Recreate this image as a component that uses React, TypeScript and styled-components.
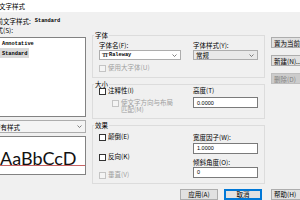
import React from "react";
import styled, { createGlobalStyle } from "styled-components";

const GlobalStyle = createGlobalStyle`
  html, body {
    margin: 0;
    padding: 0;
    background: #f0f0f0;
    overflow: hidden;
  }
`;

const Dialog = styled.div`
  width: 340px;
  height: 200px;
  margin-left: -20px;
  background: #f0f0f0;
  font-family: "Noto Sans CJK SC", "Noto Sans", sans-serif;
  font-size: 6.5px;
  line-height: 8px;
  color: #000;
`;

const TitleBar = styled.div`
  height: 12px;
  background: #fff;
  display: flex;
  align-items: center;
  padding-left: 19px;
  font-size: 6.5px;
`;

const Body = styled.div`
  display: grid;
  grid-template-columns: 96px 173px 52px;
  grid-template-rows: auto auto;
  column-gap: 6px;
  padding: 5px 0 0 10px;
`;

const LeftColumn = styled.div`
  display: flex;
  flex-direction: column;
`;

const Line = styled.div<{ $mt?: number }>`
  height: 8px;
  margin-top: ${(p) => p.$mt ?? 0}px;
  display: flex;
  align-items: center;
  gap: 4px;
  white-space: nowrap;
`;

const Mono = styled.span`
  font-family: "Liberation Mono", "DejaVu Sans Mono", monospace;
  font-weight: bold;
  font-size: 5.3px;
`;

const StyleList = styled.div`
  margin-top: 3px;
  height: 80px;
  box-sizing: border-box;
  background: #fff;
  border: 1px solid #828282;
`;

const ListItem = styled.div`
  height: 10px;
  display: flex;
  align-items: center;
`;

const ItemIcon = styled.span`
  width: 9px;
  height: 8px;
  flex: none;
  display: flex;
  align-items: center;
  justify-content: flex-end;
`;

const ItemText = styled.span<{ $selected?: boolean }>`
  padding: 0 2px;
  line-height: 8px;
  background: ${(p) => (p.$selected ? "#d9d9d9" : "transparent")};
`;

const Combo = styled.div<{ $bg?: string; $mt?: number }>`
  height: ${(p) => (p.$mt !== undefined ? 10 : 13)}px;
  margin-top: ${(p) => p.$mt ?? 3}px;
  box-sizing: border-box;
  border: 1px solid #adadad;
  background: ${(p) => p.$bg ?? "#e9e9e9"};
  display: flex;
  align-items: center;
  justify-content: space-between;
  padding: 0 3px 0 2px;
  white-space: nowrap;
`;

const ComboValue = styled.span`
  display: flex;
  align-items: center;
  gap: 2px;
`;

const Preview = styled.div`
  margin-top: 3px;
  height: 39px;
  box-sizing: border-box;
  background: #fff;
  border: 1px solid #828282;
  overflow: hidden;
`;

const Sample = styled.div`
  height: 28px;
  border-bottom: 1px solid #c86464;
  display: flex;
  align-items: flex-end;
  padding-left: 9px;
  font-family: Lato, "Open Sans", sans-serif;
  font-size: 18px;
  line-height: 14px;
  color: #111;
  white-space: nowrap;
`;

const GroupColumn = styled.div`
  padding-top: 18px;
  display: flex;
  flex-direction: column;
`;

const GroupBox = styled.div<{ $mt?: number; $pb?: number }>`
  position: relative;
  margin-top: ${(p) => p.$mt ?? 0}px;
  border: 1px solid #dcdcdc;
  padding: 0 6px ${(p) => p.$pb ?? 4}px 6px;
  display: grid;
  grid-template-columns: 82px 65px;
  column-gap: 12px;
`;

const GroupTitle = styled.span`
  position: absolute;
  top: -5px;
  left: 1px;
  padding: 0 1px;
  background: #f0f0f0;
  line-height: 8px;
`;

const Column = styled.div`
  display: flex;
  flex-direction: column;
`;

const Label = styled.div<{ $mt?: number }>`
  margin-top: ${(p) => p.$mt ?? 0}px;
  line-height: 8px;
  white-space: nowrap;
`;

const CheckRow = styled.div<{ $mt?: number; $disabled?: boolean; $indent?: number }>`
  margin-top: ${(p) => p.$mt ?? 0}px;
  padding-left: ${(p) => p.$indent ?? 0}px;
  display: flex;
  align-items: flex-start;
  gap: 2px;
  line-height: 7px;
  color: ${(p) => (p.$disabled ? "#a0a0a0" : "#000")};
  white-space: nowrap;
`;

const TwoLines = styled.span`
  line-height: 7.5px;
  margin-top: -0.5px;
`;

const Box = styled.span<{ $disabled?: boolean }>`
  width: 5px;
  height: 5px;
  flex: none;
  margin-top: 1px;
  border: 1px solid ${(p) => (p.$disabled ? "#c4c4c4" : "#333")};
  background: ${(p) => (p.$disabled ? "#f4f4f4" : "#fff")};
`;

const TextInput = styled.div<{ $mt?: number }>`
  margin-top: ${(p) => p.$mt ?? 0}px;
  height: 11px;
  box-sizing: border-box;
  border: 1px solid #7a7a7a;
  background: #fff;
  padding-left: 3px;
  display: flex;
  align-items: center;
  font-family: "Liberation Sans", Arial, sans-serif;
  font-size: 5.5px;
`;

const SideButtons = styled.div`
  padding-top: 20px;
  display: flex;
  flex-direction: column;
  gap: 7px;
`;

const Button = styled.div<{ $disabled?: boolean; $default?: boolean; $left?: boolean }>`
  height: 11px;
  box-sizing: border-box;
  border: 1px solid ${(p) => (p.$default ? "#0078d7" : p.$disabled ? "#bfbfbf" : "#adadad")};
  box-shadow: ${(p) => (p.$default ? "inset 0 0 0 1px #0078d7" : "none")};
  background: ${(p) => (p.$disabled ? "#cccccc" : "#e1e1e1")};
  color: ${(p) => (p.$disabled ? "#838383" : "#000")};
  display: flex;
  align-items: center;
  justify-content: ${(p) => (p.$left ? "flex-start" : "center")};
  padding-left: ${(p) => (p.$left ? 2 : 0)}px;
  white-space: nowrap;
`;

const Footer = styled.div`
  grid-column: 2;
  margin-top: 5px;
  padding-right: 3px;
  display: flex;
  justify-content: flex-end;
  gap: 6px;
`;

const FooterSide = styled.div`
  grid-column: 3;
  margin-top: 5px;
`;

const FooterButton = styled(Button)`
  width: 38px;
`;

const Chevron = () => (
  <svg width="5" height="3" viewBox="0 0 5 3">
    <path d="M0.5 0.5 L2.5 2.5 L4.5 0.5" fill="none" stroke="#606060" strokeWidth="0.8" />
  </svg>
);

const AnnotativeIcon = () => (
  <svg width="7" height="7" viewBox="0 0 7 7">
    <path d="M1 6 L3.5 1 L6 6 Z" fill="none" stroke="#333" strokeWidth="0.8" />
  </svg>
);

const TrueTypeIcon = styled.span`
  font-family: "Liberation Serif", serif;
  font-weight: bold;
  font-size: 6px;
  letter-spacing: -1.5px;
  color: #333;
`;

export default function App() {
  return (
    <>
      <GlobalStyle />
      <Dialog>
        <TitleBar>文字样式</TitleBar>
        <Body>
          <LeftColumn>
            <Line>
              当前文字样式:
              <Mono>Standard</Mono>
            </Line>
            <Line $mt={1}>样式(S):</Line>
            <StyleList>
              <ListItem>
                <ItemIcon>
                  <AnnotativeIcon />
                </ItemIcon>
                <ItemText>
                  <Mono>Annotative</Mono>
                </ItemText>
              </ListItem>
              <ListItem>
                <ItemIcon />
                <ItemText $selected>
                  <Mono>Standard</Mono>
                </ItemText>
              </ListItem>
            </StyleList>
            <Combo $bg="#f4f4f4">
              <span style={{ paddingLeft: 1 }}>所有样式</span>
              <Chevron />
            </Combo>
            <Preview>
              <Sample>AaBbCcD</Sample>
            </Preview>
          </LeftColumn>

          <GroupColumn>
            <GroupBox $pb={5}>
              <GroupTitle>字体</GroupTitle>
              <Column>
                <Label $mt={5}>字体名(F):</Label>
                <Combo $mt={1} $bg="#fff">
                  <ComboValue>
                    <TrueTypeIcon>TT</TrueTypeIcon>
                    <Mono>Raleway</Mono>
                  </ComboValue>
                  <Chevron />
                </Combo>
                <CheckRow $mt={4} $disabled>
                  <Box $disabled />
                  使用大字体(U)
                </CheckRow>
              </Column>
              <Column>
                <Label $mt={5}>字体样式(Y):</Label>
                <Combo $mt={1}>
                  <span>常规</span>
                  <Chevron />
                </Combo>
              </Column>
            </GroupBox>

            <GroupBox $mt={6} $pb={4}>
              <GroupTitle>大小</GroupTitle>
              <Column>
                <CheckRow $mt={2}>
                  <Box />
                  注释性(I)
                </CheckRow>
                <CheckRow $mt={4} $indent={13} $disabled>
                  <Box $disabled />
                  <TwoLines>
                    使文字方向与布局
                    <br />
                    匹配(M)
                  </TwoLines>
                </CheckRow>
              </Column>
              <Column>
                <Label $mt={1}>高度(T)</Label>
                <TextInput $mt={3}>0.0000</TextInput>
              </Column>
            </GroupBox>

            <GroupBox $mt={6} $pb={4}>
              <GroupTitle>效果</GroupTitle>
              <Column>
                <CheckRow $mt={7}>
                  <Box />
                  颠倒(E)
                </CheckRow>
                <CheckRow $mt={12}>
                  <Box />
                  反向(K)
                </CheckRow>
                <CheckRow $mt={10} $disabled>
                  <Box $disabled />
                  垂直(V)
                </CheckRow>
              </Column>
              <Column>
                <Label $mt={7}>宽度因子(W):</Label>
                <TextInput $mt={2}>1.0000</TextInput>
                <Label $mt={4}>倾斜角度(O):</Label>
                <TextInput $mt={1}>0</TextInput>
              </Column>
            </GroupBox>
          </GroupColumn>

          <SideButtons>
            <Button $left>置为当前(C)</Button>
            <Button $left>新建(N)...</Button>
            <Button $left $disabled>
              删除(D)
            </Button>
          </SideButtons>

          <Footer>
            <FooterButton>应用(A)</FooterButton>
            <FooterButton $default>取消</FooterButton>
          </Footer>
          <FooterSide>
            <FooterButton $left>帮助(H)</FooterButton>
          </FooterSide>
        </Body>
      </Dialog>
    </>
  );
}
